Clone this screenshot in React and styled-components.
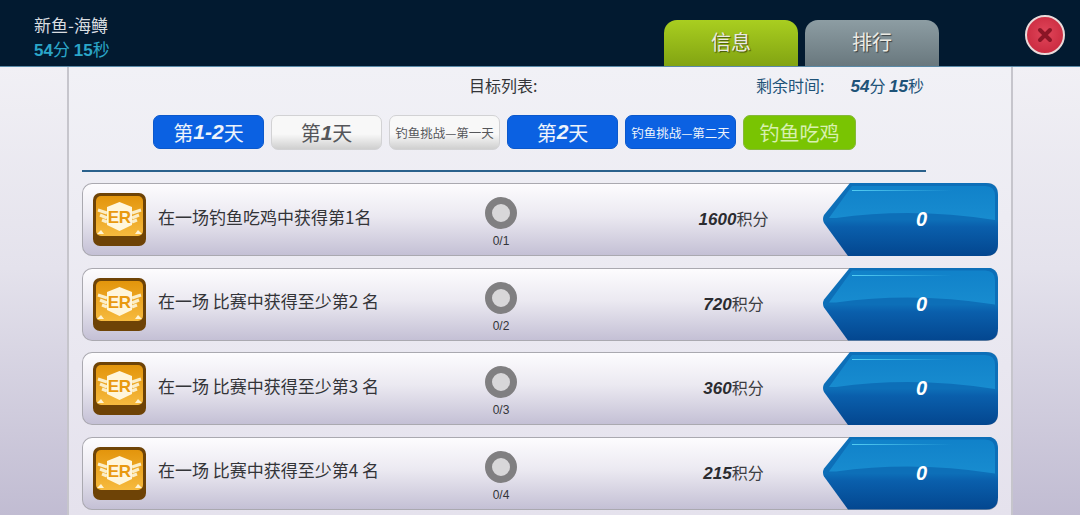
import React from 'react';
import styled, { createGlobalStyle } from 'styled-components';

const cjk = '"Noto Sans CJK SC", "Noto Sans", sans-serif';
const latin = '"Liberation Sans", Arial, sans-serif';

const GlobalStyle = createGlobalStyle`
  html, body { margin: 0; padding: 0; height: 100%; overflow: hidden; }
  body { font-family: ${cjk}; background: #eeedf4; }
`;

const Page = styled.div`
  width: 1080px;
  height: 515px;
  display: flex;
  flex-direction: column;
  overflow: hidden;
`;

// -------------------------------------------------------------------------------
// HEADER
const Header = styled.header`
  flex: none;
  height: 67px;
  box-sizing: border-box;
  padding: 15px 15px 0 34px;
  display: flex;
  background: #021a30;
  border-bottom: 1px solid #5a8aa8;
`;

const HeaderInfo = styled.div`
  flex: 1;
  display: flex;
  flex-direction: column;
  margin-top: -2px;
`;

const FishName = styled.div`
  font-size: 17px;
  line-height: 24px;
  color: #d9dde0;
`;

const TimeLeft = styled.div`
  font-size: 17px;
  line-height: 24px;
  color: #2ba6c8;
  b { font-family: ${latin}; font-weight: 700; }
`;

const Tabs = styled.div`
  display: flex;
  gap: 7px;
  margin-top: 5px;
  margin-right: 86px;
`;

const Tab = styled.div`
  width: 134px;
  height: 46px;
  box-sizing: border-box;
  padding-bottom: 4px;
  display: flex;
  align-items: center;
  justify-content: center;
  border-radius: 13px 13px 0 0;
  font-size: 20px;
  color: #ecebe4;
  text-shadow: 1px 1px 1px rgba(0, 0, 0, 0.55);
  background: ${({ $active }) => ($active
    ? 'linear-gradient(#a9ce20, #82a412)'
    : 'linear-gradient(#8d9da3, #69787e)')};
`;

const CloseButton = styled.div`
  width: 40px;
  height: 40px;
  box-sizing: border-box;
  display: flex;
  align-items: center;
  justify-content: center;
  border-radius: 50%;
  border: 2px solid #e9dada;
  background: radial-gradient(circle at 50% 45%, #e0465a, #c42238);
`;

// -------------------------------------------------------------------------------
// BODY
const Body = styled.div`
  flex: 1;
  display: flex;
  min-height: 0;
`;

const Side = styled.div`
  flex: 1;
  background: linear-gradient(#f1f0f5, #e4e2ec 45%, #c1bcd2);
`;

const Panel = styled.main`
  flex: none;
  width: 946px;
  box-sizing: border-box;
  padding: 0 13px;
  background: linear-gradient(#f1f1f6, #e5e2ed);
  border-left: 2px solid #c6c5cc;
  border-right: 2px solid #c6c5cc;
`;

const TitleBar = styled.div`
  height: 48px;
  box-sizing: border-box;
  padding: 0 0 12px 387px;
  display: flex;
  align-items: center;
  justify-content: space-between;
  width: 842px;
`;

const ListTitle = styled.div`
  font-size: 16px;
  color: #333438;
`;

const Remaining = styled.div`
  font-size: 16px;
  color: #1e5378;
  b {
    font-family: ${latin};
    font-size: 17px;
    font-style: italic;
    font-weight: 700;
  }
  span { margin-right: 26px; }
`;

const DayBar = styled.div`
  height: 35px;
  padding-left: 71px;
  display: flex;
  gap: 7px;
`;

const skins = {
  blue: 'background: #0b61e2; color: #edf3fb; border: 1px solid #0b58cc;',
  grey: 'background: linear-gradient(#f8f8f8 55%, #cfcfcf); color: #55565a; border: 1px solid #d2d2d4;',
  green: 'background: #79c402; color: #d8f0b0; border: 1px solid #86b83a;',
};

const DayButton = styled.div`
  width: ${({ $wide }) => ($wide ? 113 : 111)}px;
  height: ${({ $skin }) => ($skin === 'blue' ? 34 : 35)}px;
  box-sizing: border-box;
  display: flex;
  align-items: center;
  justify-content: center;
  border-radius: 7px;
  font-size: ${({ $small }) => ($small ? 12.5 : 20)}px;
  white-space: nowrap;
  ${({ $skin }) => skins[$skin]}
  b {
    font-family: ${latin};
    font-size: 21px;
    font-style: italic;
    font-weight: 700;
  }
`;

const Divider = styled.div`
  width: 844px;
  height: 2px;
  margin: 20px 0 11px;
  background: #2a618c;
`;

const RowList = styled.div`
  display: flex;
  flex-direction: column;
  gap: 11.5px;
`;

const Row = styled.div`
  width: 916px;
  height: 73px;
  box-sizing: border-box;
  padding-left: 10px;
  display: grid;
  grid-template-columns: 53px 284px 142px 1fr 175px;
  align-items: center;
  border: 1px solid #aaa9b0;
  border-right: none;
  border-radius: 10px;
  background: linear-gradient(#fdfcfe, #ebe9f1 45%, #c4c0d5);
`;

const Badge = styled.svg`
  display: block;
  width: 53px;
  height: 53px;
`;

const GoalText = styled.div`
  padding: 0 0 7px 12px;
  font-size: 17px;
  color: #333438;
  white-space: pre;
`;

const Progress = styled.div`
  display: flex;
  flex-direction: column;
  align-items: center;
  gap: 5px;
  padding-top: 6px;
`;

const Ring = styled.div`
  width: 32px;
  height: 32px;
  box-sizing: border-box;
  border-radius: 50%;
  border: 7px solid #807f81;
  background: #d8d7d9;
`;

const Count = styled.div`
  font-family: ${latin};
  font-size: 12px;
  line-height: 14px;
  color: #333438;
`;

const Points = styled.div`
  padding: 0 0 3px 72px;
  display: flex;
  justify-content: center;
  align-items: baseline;
  font-size: 16px;
  color: #3c3d42;
  b {
    font-family: ${latin};
    font-size: 17px;
    font-style: italic;
    font-weight: 700;
    color: #2b2c30;
  }
`;

const ClaimButton = styled.div`
  position: relative;
  width: 175px;
  height: 73px;
  margin: -1px 0;
  box-sizing: border-box;
  padding-left: 22px;
  display: flex;
  align-items: center;
  justify-content: center;
  clip-path: path('M27 0 H163 Q175 0 175 12 V61 Q175 73 163 73 H25 L1 40 Q-1 36 1 32 Z');
  background: linear-gradient(#0d6fb8 50%, #0a5fac 60%, #03468f);
  font-family: ${latin};
  font-size: 20px;
  font-style: italic;
  font-weight: 700;
  color: #fff;

  &::before {
    content: '';
    position: absolute;
    inset: 0;
    clip-path: path('M29 3 H162 Q172 3 172 13 V37 Q90 24 13 35 L6 35 Z');
    background: linear-gradient(#1081c9, #2097d6);
  }

  &::after {
    content: '';
    position: absolute;
    left: 29px;
    top: 7px;
    width: 100px;
    height: 1px;
    background: linear-gradient(90deg, #53cdf2, transparent);
  }

  span { position: relative; z-index: 1; }
`;

const BadgeArt = () => (
  <Badge viewBox="0 0 53 53">
    <defs>
      <linearGradient id="orange" x1="0" y1="0" x2="0" y2="1">
        <stop offset="0" stopColor="#e3950c" />
        <stop offset="1" stopColor="#f6ba3e" />
      </linearGradient>
    </defs>
    <rect width="53" height="53" rx="7" fill="#6e4306" />
    <rect x="3" y="3" width="47" height="40" rx="5" fill="url(#orange)" />
    <path d="M4 41 L8 37 L11 41 Z M49 41 L45 37 L42 41 Z" fill="#fff3d2" />
    <path d="M5 17 L14 20 M7 22 L14 25 M9 27 L14 29 M48 17 L39 20 M46 22 L39 25 M44 27 L39 29" stroke="#fbeec8" strokeWidth="3" />
    <path d="M26.5 9 L39 14 L39 32 L26.5 38 L14 32 L14 14 Z" fill="#fff6dc" />
    <text x="20.5" y="30" textAnchor="middle" fontFamily={latin} fontSize="17" fontWeight="700" fill="#e9990f">E</text>
    <text x="32" y="30" textAnchor="middle" fontFamily={latin} fontSize="17" fontWeight="700" fill="#e9990f">R</text>
  </Badge>
);

const goals = [
  { text: '在一场钓鱼吃鸡中获得第1名', total: 1, points: 1600 },
  { text: '在一场 比赛中获得至少第2 名', total: 2, points: 720 },
  { text: '在一场 比赛中获得至少第3 名', total: 3, points: 360 },
  { text: '在一场 比赛中获得至少第4 名', total: 4, points: 215 },
];

const App = () => (
  <Page>
    <GlobalStyle />
    <Header>
      <HeaderInfo>
        <FishName>新鱼-海鳟</FishName>
        <TimeLeft><b>54</b>分 <b>15</b>秒</TimeLeft>
      </HeaderInfo>
      <Tabs>
        <Tab $active>信息</Tab>
        <Tab>排行</Tab>
      </Tabs>
      <CloseButton>
        <svg width="20" height="20" viewBox="0 0 20 20">
          <path d="M5 5 L15 15 M15 5 L5 15" stroke="#8a1526" strokeWidth="4" strokeLinecap="round" />
        </svg>
      </CloseButton>
    </Header>
    <Body>
      <Side />
      <Panel>
        <TitleBar>
          <ListTitle>目标列表:</ListTitle>
          <Remaining><span>剩余时间:</span><b>54</b>分 <b>15</b>秒</Remaining>
        </TitleBar>
        <DayBar>
          <DayButton $skin="blue">第<b>1-2</b>天</DayButton>
          <DayButton $skin="grey">第<b>1</b>天</DayButton>
          <DayButton $skin="grey" $small>钓鱼挑战—第一天</DayButton>
          <DayButton $skin="blue">第<b>2</b>天</DayButton>
          <DayButton $skin="blue" $small>钓鱼挑战—第二天</DayButton>
          <DayButton $skin="green" $wide>钓鱼吃鸡</DayButton>
        </DayBar>
        <Divider />
        <RowList>
          {goals.map((goal) => (
            <Row key={goal.total}>
              <BadgeArt />
              <GoalText>{goal.text}</GoalText>
              <Progress>
                <Ring />
                <Count>0/{goal.total}</Count>
              </Progress>
              <Points><b>{goal.points}</b>积分</Points>
              <ClaimButton><span>0</span></ClaimButton>
            </Row>
          ))}
        </RowList>
      </Panel>
      <Side />
    </Body>
  </Page>
);

export default App;
